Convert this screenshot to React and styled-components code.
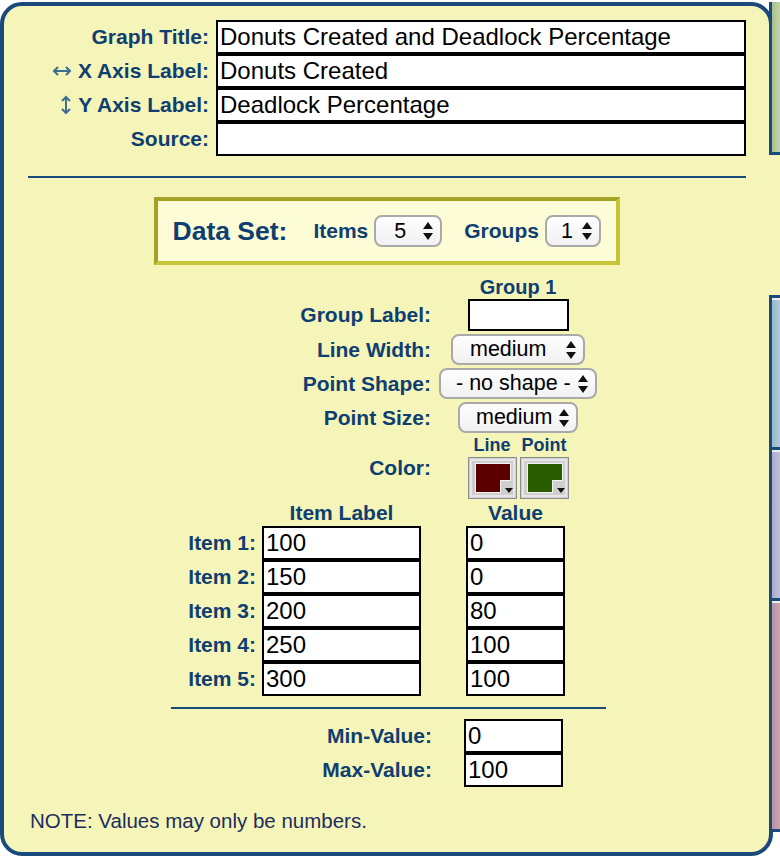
import { Fragment } from "react";
import styled, { createGlobalStyle } from "styled-components";

const NAVY = "#1a4a7c";
const INK = "#0f3e70";
const PANEL = "#f5f5b9";

const GlobalStyle = createGlobalStyle`
  html, body {
    margin: 0;
    padding: 0;
    background: #fff;
    overflow: hidden;
  }
  body {
    font-family: "Liberation Sans", Arial, sans-serif;
  }
`;

const Page = styled.div`
  display: flex;
  width: 780px;
  height: 858px;
  padding-top: 2px;
  box-sizing: border-box;
`;

const Panel = styled.main`
  width: 773px;
  height: 854px;
  flex: none;
  box-sizing: border-box;
  border: 4px solid ${NAVY};
  border-radius: 22px;
  background: ${PANEL};
  display: flex;
  flex-direction: column;
  padding-top: 14px;
`;

/* vertical tabs peeking in on the right */
const TabRail = styled.nav`
  position: relative;
  width: 11px;
  margin-left: -4px;
  flex: none;
  display: flex;
  flex-direction: column;
`;

const tabTones = {
  green: "linear-gradient(90deg, #a9bf8c, #c4d4a8)",
  blue: "linear-gradient(90deg, #95b8c8, #b0ccd8)",
  lilac: "linear-gradient(90deg, #a9abcc, #bfc0dc)",
  rose: "linear-gradient(90deg, #b9929f, #c9a6b6)",
};

const Tab = styled.div`
  height: ${(p) => p.$h}px;
  flex: none;
  box-sizing: border-box;
  background: ${(p) => tabTones[p.$tone]};
  border-left: 3px solid ${NAVY};
  border-top: ${(p) => (p.$top ? `3px solid ${NAVY}` : "none")};
  border-bottom: ${(p) => (p.$bottom ? `3px solid ${NAVY}` : "none")};
  box-shadow: inset 0 ${(p) => (p.$top ? "2px" : "0")} 0 #e8eef2;
`;

const ActiveTab = styled.div`
  height: ${(p) => p.$h}px;
  flex: none;
  background: ${PANEL};
`;

/* ---------- title form ---------- */

const TitleGrid = styled.div`
  display: grid;
  grid-template-columns: 205px 530px;
  grid-auto-rows: 34px;
  column-gap: 7px;
`;

const Label = styled.label`
  display: flex;
  align-items: center;
  justify-content: flex-end;
  gap: 6px;
  padding-right: ${(p) => p.$pr || 0}px;
  font-size: ${(p) => p.$size || 21}px;
  font-weight: bold;
  color: ${INK};
  white-space: nowrap;
`;

const TextBox = styled.input`
  width: ${(p) => (p.$w ? `${p.$w}px` : "100%")};
  height: ${(p) => p.$h || 34}px;
  box-sizing: border-box;
  margin: 0;
  border: 2px solid #000;
  border-radius: 0;
  background: #fff;
  padding: 0 2px;
  font-family: "Liberation Sans", Arial, sans-serif;
  font-size: 24px;
  color: #000;
  outline: none;
`;

const Rule = styled.hr`
  border: none;
  height: 2px;
  background: ${NAVY};
  margin: ${(p) => p.$mt}px 0 0 ${(p) => p.$ml}px;
  width: ${(p) => p.$w}px;
`;

/* ---------- data set box ---------- */

const DataSetBox = styled.section`
  align-self: center;
  width: 466px;
  height: 68px;
  margin-top: 19px;
  box-sizing: border-box;
  border: 4px solid #c6c538;
  border-top-color: #a3a227;
  border-left-color: #a3a227;
  background: #fcfcd6;
  display: flex;
  align-items: center;
  padding-left: 15px;
`;

const DataSetTitle = styled.span`
  font-size: 26.5px;
  font-weight: bold;
  color: ${INK};
  margin-right: 26px;
`;

const CountLabel = styled.span`
  font-size: 21px;
  font-weight: bold;
  color: ${INK};
  margin: 0 6px 0 ${(p) => p.$ml || 0}px;
`;

const SelectBox = styled.div`
  width: ${(p) => p.$w}px;
  height: ${(p) => p.$h || 31}px;
  box-sizing: border-box;
  display: flex;
  align-items: center;
  justify-content: space-between;
  padding: 0 7px 0 ${(p) => p.$pl || 16}px;
  border: 2px solid #a9a9a9;
  border-radius: 8px;
  background: linear-gradient(#fefefe, #f1f1f1);
  font-size: 21.5px;
  color: #000;
  white-space: nowrap;
`;

const Arrows = () => (
  <svg width="10" height="18" viewBox="0 0 10 18">
    <path d="M0 7 L5 0 L10 7 Z M0 11 L5 18 L10 11 Z" fill="#111" />
  </svg>
);

const Select = ({ value, ...rest }) => (
  <SelectBox {...rest}>
    <span>{value}</span>
    <Arrows />
  </SelectBox>
);

/* ---------- group settings ---------- */

const GroupGrid = styled.div`
  display: grid;
  grid-template-columns: 427px 160px;
  column-gap: 7px;
  row-gap: 3px;
  margin-top: 13px;
`;

const Cell = styled.div`
  display: flex;
  justify-content: center;
  align-items: ${(p) => p.$align || "center"};
  height: ${(p) => (p.$h ? `${p.$h}px` : "auto")};
`;

const SmallHead = styled.span`
  font-size: ${(p) => p.$size || 18}px;
  font-weight: bold;
  color: ${INK};
  line-height: 18px;
`;

const ColorPick = styled.div`
  display: grid;
  grid-template-columns: 49px 49px;
  column-gap: 3px;
  row-gap: 3px;
  justify-items: center;
`;

const Swatch = ({ color }) => (
  <svg width="49" height="42" viewBox="0 0 49 42">
    <rect x="0.5" y="0.5" width="48" height="41" fill="#cfcfcf" stroke="#8d8d8d" />
    <rect x="3" y="3" width="43" height="36" fill="none" stroke="#e6e6e6" strokeWidth="2" />
    <path d="M7 6 H43 V24 H33 V36 H7 Z" fill="#f2f2f2" />
    <path d="M8 7 H42 V23 H32 V35 H8 Z" fill={color} />
    <path d="M37 31 H45 L41 36 Z" fill="#111" />
  </svg>
);

/* ---------- items table ---------- */

const ItemGrid = styled.div`
  display: grid;
  grid-template-columns: 258px 204px 99px;
  grid-template-rows: 24px;
  grid-auto-rows: 34px;
  margin-top: 3px;
`;

const ColHead = styled.span`
  width: ${(p) => p.$w}px;
  text-align: center;
  font-size: 21px;
  font-weight: bold;
  color: ${INK};
  line-height: 22px;
`;

const RangeGrid = styled.div`
  display: grid;
  grid-template-columns: 428px 99px;
  grid-auto-rows: 34px;
  column-gap: 32px;
  margin-top: 10px;
`;

const Note = styled.p`
  margin: 22px 0 0 26px;
  font-size: 20.5px;
  color: #202d5e;
`;

const HArrow = () => (
  <svg width="20" height="10" viewBox="0 0 20 10">
    <path d="M2 5 H18 M6 1 L2 5 L6 9 M14 1 L18 5 L14 9" fill="none" stroke="#3c6d93" strokeWidth="2" />
  </svg>
);

const VArrow = () => (
  <svg width="12" height="20" viewBox="0 0 12 20">
    <path d="M6 2 V18 M2 6 L6 2 L10 6 M2 14 L6 18 L10 14" fill="none" stroke="#3c6d93" strokeWidth="2" />
  </svg>
);

const items = [
  ["100", "0"],
  ["150", "0"],
  ["200", "80"],
  ["250", "100"],
  ["300", "100"],
];

export default function App() {
  return (
    <Page>
      <GlobalStyle />
      <Panel>
        <TitleGrid>
          <Label>Graph Title:</Label>
          <TextBox defaultValue="Donuts Created and Deadlock Percentage" />
          <Label>
            <HArrow />
            X Axis Label:
          </Label>
          <TextBox defaultValue="Donuts Created" />
          <Label>
            <VArrow />
            Y Axis Label:
          </Label>
          <TextBox defaultValue="Deadlock Percentage" />
          <Label>Source:</Label>
          <TextBox defaultValue="" />
        </TitleGrid>

        <Rule $mt={20} $ml={24} $w={718} />

        <DataSetBox>
          <DataSetTitle>Data Set:</DataSetTitle>
          <CountLabel>Items</CountLabel>
          <Select value="5" $w={68} $h={32} $pl={18} />
          <CountLabel $ml={22}>Groups</CountLabel>
          <Select value="1" $w={56} $h={32} $pl={14} />
        </DataSetBox>

        <GroupGrid>
          <div />
          <Cell $h={18} $align="flex-end">
            <SmallHead $size={20}>Group 1</SmallHead>
          </Cell>

          <Label>Group Label:</Label>
          <Cell>
            <TextBox $w={101} $h={32} defaultValue="" />
          </Cell>

          <Label>Line Width:</Label>
          <Cell>
            <Select value="medium" $w={134} $pl={17} />
          </Cell>

          <Label>Point Shape:</Label>
          <Cell>
            <Select value="- no shape -" $w={158} $pl={15} />
          </Cell>

          <Label>Point Size:</Label>
          <Cell>
            <Select value="medium" $w={120} $pl={16} />
          </Cell>

          <Label>Color:</Label>
          <Cell>
            <ColorPick>
              <SmallHead>Line</SmallHead>
              <SmallHead>Point</SmallHead>
              <Swatch color="#5a0000" />
              <Swatch color="#2a5c00" />
            </ColorPick>
          </Cell>
        </GroupGrid>

        <ItemGrid>
          <div />
          <ColHead $w={159}>Item Label</ColHead>
          <ColHead $w={99}>Value</ColHead>
          {items.map(([label, value], i) => (
            <Fragment key={i}>
              <Label $pr={6}>Item {i + 1}:</Label>
              <TextBox $w={159} defaultValue={label} />
              <TextBox $w={99} defaultValue={value} />
            </Fragment>
          ))}
        </ItemGrid>

        <Rule $mt={11} $ml={167} $w={435} />

        <RangeGrid>
          <Label>Min-Value:</Label>
          <TextBox defaultValue="0" />
          <Label>Max-Value:</Label>
          <TextBox defaultValue="100" />
        </RangeGrid>

        <Note>NOTE: Values may only be numbers.</Note>
      </Panel>

      <TabRail>
        <Tab $tone="green" $h={153} $bottom />
        <ActiveTab $h={140} />
        <Tab $tone="blue" $h={152} $top />
        <Tab $tone="lilac" $h={151} $top />
        <Tab $tone="rose" $h={234} $top $bottom />
      </TabRail>
    </Page>
  );
}
